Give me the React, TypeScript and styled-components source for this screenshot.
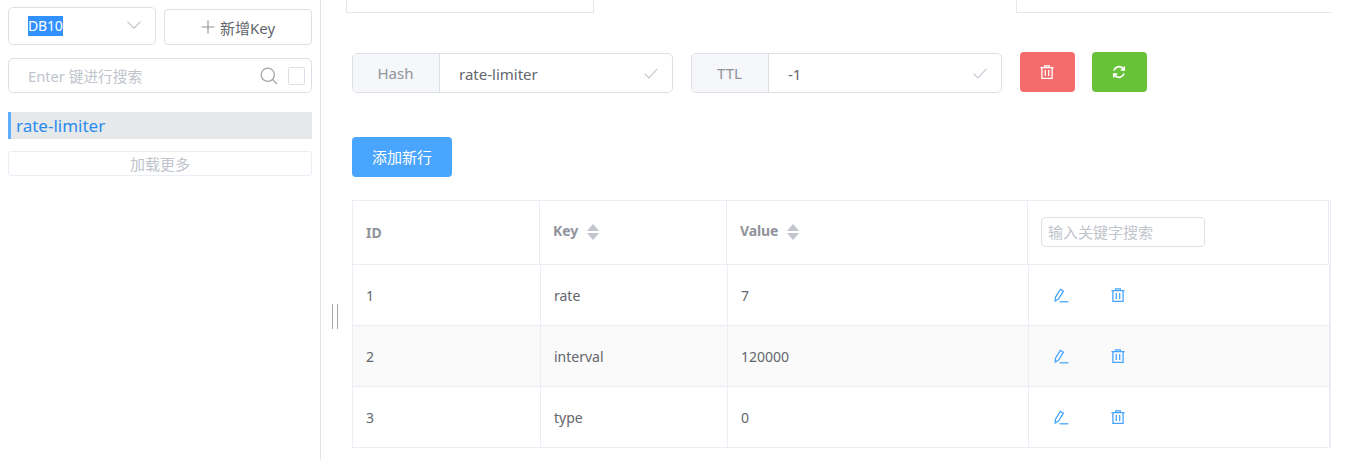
import React from "react";
import styled, { createGlobalStyle } from "styled-components";

const Global = createGlobalStyle`
  html, body { margin: 0; padding: 0; background: #fff; }
  body { font-family: "Noto Sans", "Noto Sans CJK SC", sans-serif; font-size: 14px; color: #63666c; }
  * { box-sizing: border-box; }
`;

const Page = styled.div`
  display: grid;
  grid-template-columns: 321px 1fr;
  width: 1352px;
  height: 460px;
  overflow: hidden;
`;

const Sidebar = styled.aside`
  border-right: 1px solid #e4e4e8;
  padding: 7px 8px 0;
  display: flex;
  flex-direction: column;
`;

const TopRow = styled.div`
  display: grid;
  grid-template-columns: 148px 148px;
  gap: 8px;
  align-items: end;
`;

const SelectBox = styled.div`
  height: 38px;
  border: 1px solid #dcdfe6;
  border-radius: 5px;
  padding: 0 14px 2px 19px;
  display: flex;
  align-items: center;
  justify-content: space-between;
`;

const SelectedText = styled.span`
  background: #3390ff;
  color: #fff;
  font-size: 14px;
  line-height: 20px;
  letter-spacing: -0.2px;
  margin-top: 2px;
`;

const NewKeyButton = styled.button`
  height: 36px;
  border: 1px solid #dcdfe6;
  border-radius: 4px;
  background: #fff;
  color: #63666c;
  font: inherit;
  font-size: 15px;
  display: flex;
  align-items: center;
  justify-content: center;
  gap: 5px;
  padding: 0;
`;

const SearchBox = styled.div`
  margin-top: 13px;
  height: 35px;
  border: 1px solid #dcdfe6;
  border-radius: 5px;
  padding: 0 6px 0 19px;
  display: flex;
  align-items: center;
`;

const Placeholder = styled.span`
  flex: 1;
  color: #c0c4cc;
  font-size: 14.7px;
  padding-bottom: 1px;
`;

const CheckBox = styled.span`
  width: 17px;
  height: 18px;
  margin-left: 10px;
  border: 1px solid #dcdfe6;
  border-radius: 2px;
  background: #fff;
`;

const KeyItem = styled.div`
  margin-top: 19px;
  height: 27px;
  background: #e6e9ea;
  border-left: 3px solid #60aeff;
  padding-left: 5px;
  color: #2a8bee;
  font-size: 17px;
  line-height: 28px;
`;

const LoadMore = styled.div`
  margin-top: 12px;
  height: 25px;
  border: 1px solid #ebeef5;
  border-radius: 3px;
  color: #c0c4cc;
  text-align: center;
  font-size: 15px;
  line-height: 24px;
`;

const Main = styled.main`
  position: relative;
  padding-left: 25px;
  width: 1031px;
`;

const TabStrip = styled.div`
  display: grid;
  grid-template-columns: 248px 422px 315px;
  height: 13px;
`;

const TabEdge = styled.div<{ $side: "left" | "right" }>`
  border-bottom: 1px solid #e4e7ed;
  border-left: 1px solid #e4e7ed;
  ${(p) => (p.$side === "left" ? "border-right: 1px solid #e4e7ed;" : "")}
`;

const TabGap = styled.div``;

const FormRow = styled.div`
  margin: 39px 0 0 6px;
  display: flex;
  align-items: flex-start;
`;

const InputGroup = styled.div<{ $w: number; $gap: number }>`
  width: ${(p) => p.$w}px;
  margin-right: ${(p) => p.$gap}px;
  margin-top: 1px;
  height: 40px;
  border: 1px solid #dcdfe6;
  border-radius: 5px;
  display: flex;
  align-items: stretch;
`;

const Prepend = styled.div<{ $w: number }>`
  width: ${(p) => p.$w}px;
  background: #f5f7fa;
  border-right: 1px solid #dcdfe6;
  border-radius: 4px 0 0 4px;
  color: #909399;
  display: flex;
  align-items: center;
  justify-content: center;
  font-size: 15px;
  padding-right: 1px;
`;

const InputValue = styled.div`
  flex: 1;
  padding: 1px 14px 0 19px;
  display: flex;
  align-items: center;
  justify-content: space-between;
  font-size: 15px;
  color: #63666c;
`;

const IconButton = styled.button<{ $bg: string; $gap?: number }>`
  width: 55px;
  height: 40px;
  border: 0;
  border-radius: 4px;
  background: ${(p) => p.$bg};
  margin-right: ${(p) => p.$gap ?? 0}px;
  display: flex;
  align-items: center;
  justify-content: center;
  padding: 0 1px 0 0;
`;

const AddButton = styled.button`
  display: block;
  margin: 44px 0 0 6px;
  width: 100px;
  height: 40px;
  border: 0;
  border-radius: 4px;
  background: #4aa5ff;
  color: #fff;
  font: inherit;
  font-size: 15px;
  padding: 0 0 2px;
`;

const Table = styled.div`
  margin: 23px 0 0 6px;
  width: 979px;
  border-top: 1px solid #ebeef5;
  border-left: 1px solid #ebeef5;
  border-right: 1px solid #ebeef5;
`;

const HeadRow = styled.div`
  display: grid;
  grid-template-columns: 187px 187px 301px 301px;
  height: 64px;
  border-bottom: 1px solid #ebeef5;
`;

const HeadCell = styled.div`
  border-right: 1px solid #ebeef5;
  padding-left: 13px;
  display: flex;
  align-items: center;
  gap: 9px;
  font-weight: 700;
  font-size: 14px;
  color: #909399;
`;

const HeadLabel = styled.span`
  position: relative;
  top: -2px;
  letter-spacing: -0.1px;
`;

const SortCarets = styled.span`
  display: inline-flex;
  flex-direction: column;
  gap: 2px;
  margin-bottom: 2px;
`;

const Caret = styled.i<{ $dir: "up" | "down" }>`
  display: block;
  width: 0;
  height: 0;
  border-left: 6.5px solid transparent;
  border-right: 6.5px solid transparent;
  ${(p) => (p.$dir === "up" ? "border-bottom: 7px solid #c0c4cc;" : "border-top: 7px solid #c0c4cc;")}
`;

const TableSearch = styled.div`
  width: 164px;
  height: 30px;
  margin-bottom: 2px;
  border: 1px solid #dcdfe6;
  border-radius: 4px;
  padding-left: 6px;
  display: flex;
  align-items: center;
  font-weight: 400;
  font-size: 15px;
  color: #c0c4cc;
`;

const BodyRow = styled.div<{ $striped?: boolean }>`
  display: grid;
  grid-template-columns: 188px 187px 301px 301px;
  height: 61px;
  border-bottom: 1px solid #ebeef5;
  background: ${(p) => (p.$striped ? "#fafafa" : "#fff")};
`;

const BodyCell = styled.div`
  border-right: 1px solid #ebeef5;
  padding-left: 13px;
  display: flex;
  align-items: center;
  font-size: 14px;
  color: #63666c;
`;

const Actions = styled.div`
  display: flex;
  gap: 42px;
  padding-left: 12px;
`;

const ResizeHandle = styled.div`
  position: absolute;
  left: 11px;
  top: 304px;
  width: 6px;
  height: 25px;
  border-left: 1px solid #a8a8a8;
  border-right: 1px solid #a8a8a8;
`;

const Chevron = () => (
  <svg width="14" height="8" viewBox="0 0 14 8" fill="none" stroke="#c0c4cc" strokeWidth="1.2">
    <path d="M0.5 0.7 7 7.2 13.5 0.7" />
  </svg>
);

const Plus = () => (
  <svg width="14" height="14" viewBox="0 0 14 14" stroke="#8e9196" strokeWidth="1.1">
    <path d="M7 0.5v13M0.5 7h13" />
  </svg>
);

const Search = () => (
  <svg width="18" height="18" viewBox="0 0 18 18" fill="none" stroke="#a3a6ad" strokeWidth="1.3">
    <circle cx="7.8" cy="7.8" r="6.6" />
    <path d="M12.6 12.6 17 17" />
  </svg>
);

const Check = () => (
  <svg width="14" height="11" viewBox="0 0 14 11" fill="none" stroke="#c8cbd2" strokeWidth="1.2">
    <path d="M0.7 5.8 5 10 13.3 0.8" />
  </svg>
);

const Trash = ({ color }: { color: string }) => (
  <svg width="14" height="14" viewBox="0 0 14 14" fill="none" stroke={color} strokeWidth="1.3">
    <path d="M0.4 2.6h13.2M4.6 2.6V0.8h4.8v1.8M1.9 2.6v10.7h10.2V2.6M5.3 5v6M8.7 5v6" />
  </svg>
);

const Refresh = () => (
  <svg width="14" height="14" viewBox="0 0 14 14" fill="none" stroke="#fff" strokeWidth="1.7">
    <path d="M2 5.4A5.2 5.2 0 0 1 10.6 3.2l1 1" />
    <path d="M12 8.6A5.2 5.2 0 0 1 3.4 10.8l-1-1" />
    <path d="M12.2 1.4v3.4H8.8" />
    <path d="M1.8 12.6V9.2h3.4" />
  </svg>
);

const Edit = () => (
  <svg width="15" height="15" viewBox="0 0 15 15" fill="none" stroke="#4aa5ff" strokeWidth="1.3">
    <path d="M1.5 9.2 6.4 1.4 9.4 3.2 4.5 11 1.2 13z" />
    <path d="M5.6 13.8h8.8" />
  </svg>
);

const rows = [
  { id: 1, key: "rate", value: "7" },
  { id: 2, key: "interval", value: "120000" },
  { id: 3, key: "type", value: "0" },
];

export default function App() {
  return (
    <Page>
      <Global />
      <Sidebar>
        <TopRow>
          <SelectBox>
            <SelectedText>DB10</SelectedText>
            <Chevron />
          </SelectBox>
          <NewKeyButton>
            <Plus />
            新增Key
          </NewKeyButton>
        </TopRow>
        <SearchBox>
          <Placeholder>Enter 键进行搜索</Placeholder>
          <Search />
          <CheckBox />
        </SearchBox>
        <KeyItem>rate-limiter</KeyItem>
        <LoadMore>加载更多</LoadMore>
      </Sidebar>
      <Main>
        <TabStrip>
          <TabEdge $side="left" />
          <TabGap />
          <TabEdge $side="right" />
        </TabStrip>
        <FormRow>
          <InputGroup $w={321} $gap={18}>
            <Prepend $w={87}>Hash</Prepend>
            <InputValue>
              rate-limiter
              <Check />
            </InputValue>
          </InputGroup>
          <InputGroup $w={311} $gap={18}>
            <Prepend $w={77}>TTL</Prepend>
            <InputValue>
              -1
              <Check />
            </InputValue>
          </InputGroup>
          <IconButton $bg="#f56c6c" $gap={17} aria-label="delete">
            <Trash color="#fff" />
          </IconButton>
          <IconButton $bg="#67c23a" aria-label="refresh">
            <Refresh />
          </IconButton>
        </FormRow>
        <AddButton>添加新行</AddButton>
        <Table>
          <HeadRow>
            <HeadCell>ID</HeadCell>
            <HeadCell>
              <HeadLabel>Key</HeadLabel>
              <SortCarets>
                <Caret $dir="up" />
                <Caret $dir="down" />
              </SortCarets>
            </HeadCell>
            <HeadCell>
              <HeadLabel>Value</HeadLabel>
              <SortCarets>
                <Caret $dir="up" />
                <Caret $dir="down" />
              </SortCarets>
            </HeadCell>
            <HeadCell>
              <TableSearch>输入关键字搜索</TableSearch>
            </HeadCell>
          </HeadRow>
          {rows.map((r) => (
            <BodyRow key={r.id} $striped={r.id === 2}>
              <BodyCell>{r.id}</BodyCell>
              <BodyCell>{r.key}</BodyCell>
              <BodyCell>{r.value}</BodyCell>
              <BodyCell>
                <Actions>
                  <Edit />
                  <Trash color="#4aa5ff" />
                </Actions>
              </BodyCell>
            </BodyRow>
          ))}
        </Table>
        <ResizeHandle />
      </Main>
    </Page>
  );
}
